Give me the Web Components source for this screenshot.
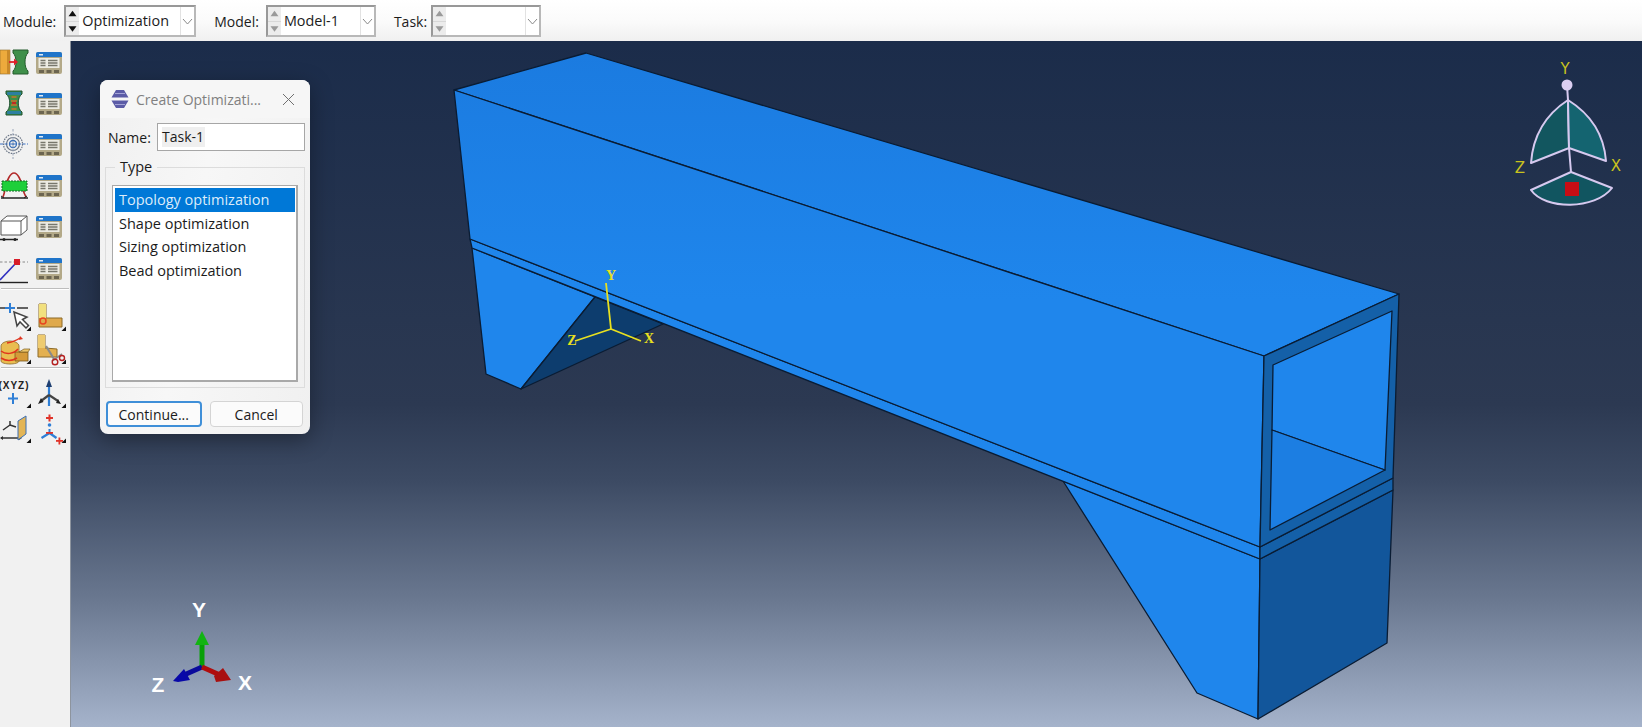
<!DOCTYPE html>
<html>
<head>
<meta charset="utf-8">
<title>Create Optimization Task</title>
<style>
    html, body { margin: 0; height: 100%; overflow: hidden; background: #f0f0f0; }
</style>
</head>
<body>
<abq-app>
    <abq-context-bar slot="top">
        <abq-combo label="Module:" value="Optimization" width="132" gap="8" active></abq-combo>
        <abq-combo label="Model:" value="Model-1" width="110" gap="7"></abq-combo>
        <abq-combo label="Task:" value="" width="110" gap="4"></abq-combo>
    </abq-context-bar>
    <abq-toolbox slot="left"></abq-toolbox>
    <abq-viewport slot="main">
        <abq-dialog heading="Create Optimizati...">
            <abq-list selected="0">
                <span>Topology optimization</span>
                <span>Shape optimization</span>
                <span>Sizing optimization</span>
                <span>Bead optimization</span>
            </abq-list>
        </abq-dialog>
    </abq-viewport>
</abq-app>

<script>
// Ikon toolbox, kotak 32x32
const managerIcon = `
    <rect x="1" y="6" width="26" height="22" rx="2" fill="#b3a988"/>
    <path d="M1 11V8a2 2 0 0 1 2-2h22a2 2 0 0 1 2 2v3z" fill="#1f74c9"/>
    <rect x="4" y="8" width="4" height="1.5" fill="#dfeaf5"/>
    <rect x="3.5" y="12" width="21" height="10" fill="#ecebe3"/>
    <path d="M5.5 14.5h5M5.5 17h5M5.5 19.5h5M13 14.5h9.500M13 17h9.500M13 19.5h9.500" stroke="#77776c" stroke-width="1.3"/>
    <rect x="4" y="24" width="5" height="3" fill="#6c6550"/>
    <rect x="11.500" y="24" width="5" height="3" fill="#6c6550"/>
    <rect x="19" y="24" width="5" height="3" fill="#6c6550"/>`;

const ICONS = {
    manager: managerIcon,
    shapeDesign: `
        <rect x="0" y="4" width="10" height="24" fill="#edaa3c" stroke="#8c6a28" stroke-width=".6"/>
        <rect x="7" y="4" width="3" height="24" fill="#c98a2a"/>
        <path d="M13 4h15v3c-4 3-4 15 0 18v3H13v-3c4-3 4-15 0-18z" fill="#3f8f4a" stroke="#245a2c" stroke-width="1"/>
        <path d="M9 16h6" stroke="#e0202a" stroke-width="1.800"/>
        <path d="M18 16l-4-3.500v7z" fill="#e0202a"/>`,
    sensitivity: `
        <path d="M6 4h16v3c-5 3-5 15 0 18v3H6v-3c5-3 5-15 0-18z" fill="#3d8e48" stroke="#1f5030" stroke-width="1"/>
        <rect x="7" y="5" width="14" height="3" rx="1" fill="#2c7fa0"/>
        <rect x="7" y="24" width="14" height="3" rx="1" fill="#2c7fa0"/>
        <path d="M11.500 10h5M11 14h6M11 18h6M11.500 22h5" stroke="#c9742c" stroke-width="1.600"/>
        <path d="M12 16h4" stroke="#c02a24" stroke-width="2"/>`,
    target: `
        <g fill="none" stroke="#6c7686">
            <circle cx="13" cy="16" r="9.500" stroke-width="1.200" stroke-dasharray="1.600 1"/>
            <circle cx="13" cy="16" r="6.500" stroke-width="1.200"/>
        </g>
        <circle cx="13" cy="16" r="3.500" fill="none" stroke="#3b6fb6" stroke-width="1.300"/>
        <circle cx="13" cy="16" r="1" fill="#3b6fb6"/>
        <path d="M0 16h28" stroke="#3b6fc0" stroke-width="1" stroke-dasharray="3 1.500"/>
        <path d="M13 1v30" stroke="#9aa5b8" stroke-width="1" stroke-dasharray="2.500 1.500"/>`,
    constraint: `
        <path d="M1 29h27" stroke="#222" stroke-width="1.500"/>
        <path d="M3 28c2-5 2-9 3-12 1-4 4-12 8-12s7 8 8 12c1 3 1 7 4 12" fill="none" stroke="#b22a2a" stroke-width="1.600"/>
        <rect x="2" y="12" width="25" height="10" fill="#1ecf3a" stroke="#156a24" stroke-width="1" stroke-dasharray="2 1"/>
        <path d="M1 27l3 2M27 27l-3 2" stroke="#222"/>`,
    box: `
        <path d="M1 11l6-5h20v14l-6 5H1z" fill="#fff" stroke="#555" stroke-width="1"/>
        <path d="M1 11h20v14M21 11l6-5" fill="none" stroke="#555" stroke-width="1"/>
        <path d="M0 29.500h18" stroke="#222" stroke-width="1.500"/>
        <circle cx="4" cy="29.500" r="1.500" fill="#222"/><circle cx="15" cy="29.500" r="1.500" fill="#222"/>`,
    amplitude: `
        <path d="M0 10h28" stroke="#888" stroke-width="1" stroke-dasharray="2.500 2"/>
        <path d="M0 28L17 10" stroke="#3030c0" stroke-width="1.600"/>
        <path d="M0 30.500h28" stroke="#222" stroke-width="1.400"/>
        <rect x="14" y="7" width="6" height="6" fill="#d81e2a"/>`,
    query: `
        <path d="M0 7h7M17 7h11" stroke="#333" stroke-width="1.300"/>
        <path d="M10 2v10M5 7h10" stroke="#2f7fd6" stroke-width="2"/>
        <path d="M14 11l3 14 3-4 6 6 2.500-2.500-6-6 4.500-2.500z" fill="#fff" stroke="#444" stroke-width="1.500"/>`,
    partition: `
        <path d="M4 3h7v14h16v9H4z" fill="#dfa94c" stroke="#8c6a28" stroke-width="1"/>
        <path d="M4 3h7v14H4z" fill="#f2e07e"/>
        <circle cx="8" cy="20" r="3" fill="none" stroke="#e8451f" stroke-width="1.500"/>`,
    solid: `
        <path d="M1 12c0-3 5-5 9-5s9 2 9 5v15c0 2-5 3-9 3s-9-1-9-3z" fill="#e9bd50" stroke="#8c6a28" stroke-width=".8"/>
        <path d="M15 18h13v9H15z" fill="#d59a38" stroke="#7a5b20" stroke-width=".8"/>
        <path d="M19 18l5-3h6l-2 3z" fill="#eec76a" stroke="#7a5b20" stroke-width=".7"/>
        <path d="M1 17c5 4 13 3 17-2M1 24c5 3 11 3 16 0M7 9c5-1 9-2 13-5" fill="none" stroke="#e0341e" stroke-width="1.500"/>
        <path d="M20 2l3 3-4 1z" fill="#e0341e"/>`,
    cut: `
        <path d="M3 1h7v13l12 1v8H3z" fill="#e3b050" stroke="#8c6a28" stroke-width="1"/>
        <path d="M3 1h7v13H3z" fill="#eecb70"/>
        <path d="M11 12l8 13" stroke="#8a8a8a" stroke-width="2.200"/>
        <path d="M27 20l-10 7" stroke="#8a8a8a" stroke-width="1.600"/>
        <circle cx="20" cy="28" r="2.800" fill="none" stroke="#b52020" stroke-width="1.400"/>
        <circle cx="27" cy="24" r="2.500" fill="none" stroke="#b52020" stroke-width="1.400"/>`,
    xyz: `
        <text x="14" y="11" text-anchor="middle" font-family="'Liberation Sans',sans-serif" font-size="10" font-weight="700" letter-spacing="1" fill="#222">(XYZ)</text>
        <path d="M13 15v11M8 20.500h10" stroke="#2f7fd6" stroke-width="2"/>`,
    csys: `
        <path d="M14 4v24" stroke="#2f7fd6" stroke-width="2.200"/>
        <path d="M14 1l-3 8h6z" fill="#1f3f70"/>
        <path d="M14 17l-8 6M14 17l9 6" stroke="#444" stroke-width="2.200"/>
        <path d="M3 26l3-6 2.500 4zM26 26l-5-1 2-4z" fill="#222"/>`,
    plane: `
        <path d="M3 17l7-5M10 12v-4M10 12l6 2" stroke="#333" stroke-width="1.500"/>
        <path d="M1 25h20" stroke="#333" stroke-width="1.500"/>
        <path d="M0 25l3-2v4zM22 25l-3-2v4z" fill="#333"/>
        <path d="M18 8l8-5v18l-8 6z" fill="#e3b556" stroke="#3a6fb6" stroke-width="1"/>`,
    datum: `
        <g fill="#e0342a"><rect x="11" y="4" width="7" height="2"/><rect x="13.500" y="1.500" width="2" height="7"/></g>
        <circle cx="14.500" cy="12" r="1.800" fill="#2f7fd6"/>
        <path d="M14.500 16v4" stroke="#2f7fd6" stroke-width="2"/>
        <path d="M14.500 20l-8 5M14.500 20l7 5" stroke="#2f7fd6" stroke-width="2.200"/>
        <g fill="#e0342a"><rect x="11" y="19" width="7" height="1.800"/><rect x="21" y="27" width="7" height="1.800"/><rect x="23.500" y="24.500" width="1.800" height="7"/></g>`
};

// Layout utama halaman
class AbqApp extends HTMLElement {
    constructor() {
        super();
        this.attachShadow({ mode: 'open' }).innerHTML = `
            <style>
                :host {
                    display: grid;
                    grid-template: 41px 686px / 71px 1571px;
                    width: 1642px;
                    height: 727px;
                    font-family: "Open Sans", "Liberation Sans", sans-serif;
                    color: #1b1b1b;
                }
                .top { grid-column: 1 / 3; display: grid; }
                .left, .main { display: grid; min-height: 0; }
            </style>
            <div class="top"><slot name="top"></slot></div>
            <div class="left"><slot name="left"></slot></div>
            <div class="main"><slot name="main"></slot></div>
        `;
    }
}

class AbqContextBar extends HTMLElement {
    constructor() {
        super();
        this.attachShadow({ mode: 'open' }).innerHTML = `
            <style>
                :host {
                    display: flex;
                    align-items: flex-start;
                    gap: 18px;
                    padding: 5px 0 0 3px;
                    box-sizing: border-box;
                    background: linear-gradient(#ffffff, #fafafa 55%, #f0f0f0);
                }
            </style>
            <slot></slot>
        `;
    }
}

// Combo box dengan spinner dan panah
class AbqCombo extends HTMLElement {
    constructor() {
        super();
        this.attachShadow({ mode: 'open' });
    }

    connectedCallback() {
        const arrow = this.hasAttribute('active') ? '#111' : '#9a9a9a';
        const label = this.getAttribute('label');
        this.shadowRoot.innerHTML = `
            <style>
                :host { display: flex; align-items: center; gap: ${this.getAttribute('gap')}px; height: 32px; font-size: 14px; }
                .box {
                    display: flex;
                    box-sizing: border-box;
                    height: 32px;
                    width: ${this.getAttribute('width')}px;
                    border: 2px solid #989898;
                    border-right-color: #b8b8b8;
                    border-bottom-color: #b8b8b8;
                    background: #fff;
                }
                .spin {
                    width: 13px;
                    background: #d8d8d8;
                    display: grid;
                    grid-template-rows: 1fr 1fr;
                    gap: 1px;
                }
                .spin svg { display: block; width: 13px; height: 100%; background: #ececec; }
                .value { flex: 1; padding-left: 3px; line-height: 27px; white-space: pre; font-size: 14.400px; }
                .drop { width: 13px; border-left: 1px solid #e2e2e2; display: flex; align-items: center; justify-content: center; }
            </style>
            <span>${label}</span>
            <div class="box">
                <div class="spin">
                    <svg viewBox="0 0 13 13"><path d="M2.500 9L6.500 3.500l4 5.500z" fill="${arrow}"/></svg>
                    <svg viewBox="0 0 13 13"><path d="M2.500 4L6.500 9.500l4-5.500z" fill="${arrow}"/></svg>
                </div>
                <div class="value">${this.getAttribute('value')}</div>
                <div class="drop">
                    <svg width="11" height="7" viewBox="0 0 11 7"><path d="M1 1l4.500 5L10 1" fill="none" stroke="#8a8a8a"/></svg>
                </div>
            </div>
        `;
    }
}

class AbqTool extends HTMLElement {
    constructor() {
        super();
        this.attachShadow({ mode: 'open' });
    }

    connectedCallback() {
        const flyout = this.hasAttribute('flyout')
            ? '<path d="M31 30v-4.500l-4.500 4.500z" fill="#111"/>' : '';
        this.shadowRoot.innerHTML = `
            <style>
                :host { display: flex; align-items: center; justify-content: center; }
                svg { display: block; overflow: visible; }
            </style>
            <svg width="32" height="32" viewBox="0 0 32 32">${ICONS[this.getAttribute('icon')]}${flyout}</svg>
        `;
    }
}

class AbqToolbox extends HTMLElement {
    constructor() {
        super();
        const rows = [
            ['shapeDesign', 'manager'], ['sensitivity', 'manager'], ['target', 'manager'],
            ['constraint', 'manager'], ['box', 'manager'], ['amplitude', 'manager']
        ];
        const tool = (name, flyout) => `<abq-tool icon="${name}"${flyout ? ' flyout' : ''}></abq-tool>`;
        this.attachShadow({ mode: 'open' }).innerHTML = `
            <style>
                :host {
                    display: block;
                    box-sizing: border-box;
                    background: #f1f1f1;
                    border-right: 1px solid #8d949e;
                }
                .group { display: grid; grid-template-columns: 31px 39px; }
                .managers { grid-auto-rows: 41.2px; }
                .mid { grid-auto-rows: 33px; padding-top: 10px; }
                .low { grid-auto-rows: 35px; padding-top: 7px; }
                hr { border: 0; border-top: 1px solid #bdbdbd; border-bottom: 1px solid #fff; margin: 0 1px; }
            </style>
            <div class="group managers">${rows.map(r => tool(r[0]) + tool(r[1])).join('')}</div>
            <hr>
            <div class="group mid">
                ${tool('query', 1)}${tool('partition', 1)}${tool('solid', 1)}${tool('cut', 1)}
            </div>
            <hr style="margin-top:1px">
            <div class="group low">
                ${tool('xyz', 1)}${tool('csys', 1)}${tool('plane', 1)}${tool('datum', 1)}
            </div>
        `;
    }
}

// Kanvas model: koordinat svg = koordinat halaman dikurangi (71, 41)
class AbqViewport extends HTMLElement {
    constructor() {
        super();
        this.attachShadow({ mode: 'open' }).innerHTML = `
            <style>
                :host {
                    display: block;
                    position: relative;
                    overflow: hidden;
                    background: linear-gradient(#1b2c4a 0, #2c3952 53%, #3c4a63 64%, #6a7890 81.500%, #a5b3cb 100%);
                }
                svg { position: absolute; left: 0; top: 0; }
                ::slotted(abq-dialog) { position: absolute; left: 29px; top: 39px; }
                text { font-family: "DejaVu Sans", sans-serif; }
            </style>
            <svg width="1571" height="686" viewBox="71 41 1571 686">
                <defs>
                    <linearGradient id="topFace" gradientUnits="userSpaceOnUse" x1="0" y1="53" x2="0" y2="300">
                        <stop offset="0" stop-color="#1b7be0"/>
                        <stop offset="1" stop-color="#1f86ec"/>
                    </linearGradient>
                </defs>
                <g stroke="#0a1c33" stroke-width="1.300" stroke-linejoin="round">
                    <!-- rongga bawah dan pelat kiri -->
                    <path d="M472 248L486 374L521 389L595 297Z" fill="#1f86ec"/>
                    <path d="M595 297L663 324L521 389Z" fill="#0d3d6e"/>
                    <path d="M1063 481L1260 559L1258 719L1197 693Z" fill="#1f86ec"/>
                    <path d="M1260 559L1393 490L1387 643L1258 719Z" fill="#12569b"/>
                    <!-- pelat tengah -->
                    <path d="M470 239L1260 547L1260 559L472 248Z" fill="#1f86ec"/>
                    <path d="M1260 547L1393 478L1393 490L1260 559Z" fill="#1460a8"/>
                    <!-- kotak atas -->
                    <path d="M454 90L586 53L1399 294L1264 356Z" fill="url(#topFace)"/>
                    <path d="M454 90L1264 356L1260 547L470 239Z" fill="url(#topFace)"/>
                    <path d="M1264 356L1399 294L1393 478L1260 547Z" fill="#1460a8"/>
                    <path d="M1273 365L1392 311L1385 470L1272 430Z" fill="#1f86ec"/>
                    <path d="M1272 430L1385 470L1270 530Z" fill="#1c7ee2"/>
                </g>

                <!-- triad asal model -->
                <g stroke="#e8e020" stroke-width="1.800" fill="none">
                    <path d="M606 283L611 329M611 329L575 341M611 329L641 341"/>
                </g>
                <g fill="#e8e020" font-size="14" text-anchor="middle">
                    <text x="611" y="280" style="font-family:'Liberation Serif',serif;font-weight:700">Y</text>
                    <text x="572" y="345" style="font-family:'Liberation Serif',serif;font-weight:700">Z</text>
                    <text x="649" y="343" style="font-family:'Liberation Serif',serif;font-weight:700">X</text>
                </g>

                <!-- view cube kanan atas -->
                <g stroke="#d6c9ef" stroke-width="2" stroke-linejoin="round">
                    <path d="M1568 100C1545 115 1533 135 1531 163L1569 148Z" fill="#12565f"/>
                    <path d="M1568 100C1592 115 1604 135 1606 161L1569 148Z" fill="#146470"/>
                    <path d="M1571 172L1531 190C1545 210 1595 210 1612 188Z" fill="#115560"/>
                    <path d="M1567 85L1568 100M1569 148L1571 172" fill="none"/>
                </g>
                <circle cx="1567" cy="85" r="5.500" fill="#dccff2"/>
                <rect x="1565" y="182" width="14" height="14" fill="#c80d14"/>
                <g fill="#c9c21e" font-size="15" text-anchor="middle">
                    <text x="1565" y="74">Y</text>
                    <text x="1520" y="173">Z</text>
                    <text x="1616" y="171">X</text>
                </g>

                <!-- triad kiri bawah -->
                <path d="M202 667V645" stroke="#08a008" stroke-width="5"/>
                <path d="M202 631L195 645H209Z" fill="#12b412"/>
                <path d="M202 667L184 675" stroke="#0a0a9c" stroke-width="5"/>
                <path d="M173 681L184 669L190 680L178 682Z" fill="#0808a8"/>
                <path d="M202 667L220 675" stroke="#b00c0c" stroke-width="5"/>
                <path d="M231 680L216 682L214 676L223 668Z" fill="#a81010"/>
                <g fill="#fff" font-size="21" text-anchor="middle">
                    <text x="199" y="617" style="font-family:'Liberation Sans',sans-serif;font-weight:700">Y</text>
                    <text x="158" y="692" style="font-family:'Liberation Sans',sans-serif;font-weight:700">Z</text>
                    <text x="245" y="690" style="font-family:'Liberation Sans',sans-serif;font-weight:700">X</text>
                </g>
            </svg>
            <slot></slot>
        `;
    }
}

class AbqDialog extends HTMLElement {
    constructor() {
        super();
        this.attachShadow({ mode: 'open' });
    }

    connectedCallback() {
        this.shadowRoot.innerHTML = `
            <style>
                :host {
                    display: block;
                    box-sizing: border-box;
                    width: 210px;
                    height: 354px;
                    border-radius: 8px;
                    overflow: hidden;
                    background: linear-gradient(100deg, #f0f0f0, #f7f7f7 45%, #f0f0f0);
                    box-shadow: 0 6px 22px rgba(0, 0, 0, .35);
                    font-size: 14px;
                }
                .title {
                    display: flex;
                    align-items: center;
                    height: 38px;
                    background: #f6f6f6;
                    color: #808080;
                    font-size: 14px;
                    padding-left: 11px;
                    box-sizing: border-box;
                }
                .title span { flex: 1; padding-left: 7px; }
                .title svg:last-child { margin-right: 15px; }
                .name { display: flex; align-items: center; gap: 5px; padding: 5px 5px 0 8px; }
                .name span { width: 44px; white-space: nowrap; }
                .name div {
                    flex: 1;
                    box-sizing: border-box;
                    height: 28px;
                    border: 1px solid #a6a6a6;
                    background: #fff;
                    padding: 3px 4px;
                    line-height: 20px;
                }
                .name b { font-weight: 400; background: #efefef; display: inline-block; padding-right: 1px; }
                fieldset {
                    margin: 6px 5px 0;
                    padding: 8px 6px 4px 6px;
                    height: 231px;
                    box-sizing: border-box;
                    border: 1px solid #dcdcdc;
                    min-width: 0;
                }
                legend { margin-left: 3px; padding: 0 5px; line-height: 20px; font-size: 14.500px; }
                .buttons { display: flex; gap: 8px; padding: 13px 7px 0 6px; }
                button {
                    flex: 1;
                    height: 26px;
                    font: inherit;
                    color: #1b1b1b;
                    padding: 0;
                    border: 1px solid #d4d4d4;
                    border-radius: 4px;
                    background: #fbfbfb;
                }
                button.main { border: 2px solid #3f8fd8; }
            </style>
            <div class="title">
                <svg width="18" height="18" viewBox="0 0 18 18">
                    <path d="M5 0H13L17.500 7.500H.5Z" fill="#5b5ba6"/>
                    <path d="M.5 10.500H17.500L13 18H5Z" fill="#5b5ba6"/>
                    <path d="M4 3.500h10M4 14.500h10" stroke="#a3a3d6"/>
                </svg>
                <span>${this.getAttribute('heading')}</span>
                <svg width="13" height="13" viewBox="0 0 13 13"><path d="M1 1l11 11M12 1L1 12" stroke="#707070" stroke-width="1"/></svg>
            </div>
            <div class="name">
                <span>Name:</span>
                <div><b>Task-1</b></div>
            </div>
            <fieldset>
                <legend>Type</legend>
                <slot></slot>
            </fieldset>
            <div class="buttons">
                <button class="main">Continue...</button>
                <button>Cancel</button>
            </div>
        `;
    }
}

// List pilihan dengan satu baris terpilih
class AbqList extends HTMLElement {
    constructor() {
        super();
        this.attachShadow({ mode: 'open' }).innerHTML = `
            <style>
                :host {
                    display: flex;
                    flex-direction: column;
                    box-sizing: border-box;
                    height: 197px;
                    padding: 2px 1px 2px 2px;
                    background: #fff;
                    border: 1px solid #a9a9a9;
                    border-bottom-width: 2px;
                    border-right-width: 2px;
                    font-size: 14.500px;
                }
                ::slotted(span) { display: block; height: 23.600px; line-height: 23.600px; padding-left: 4px; }
                ::slotted(.selected) { background: #0078d7; color: #dcecfa; }
            </style>
            <slot></slot>
        `;
    }

    connectedCallback() {
        const idx = Number(this.getAttribute('selected'));
        this.querySelectorAll('span')[idx].className = 'selected';
    }
}

customElements.define('abq-app', AbqApp);
customElements.define('abq-context-bar', AbqContextBar);
customElements.define('abq-combo', AbqCombo);
customElements.define('abq-tool', AbqTool);
customElements.define('abq-toolbox', AbqToolbox);
customElements.define('abq-viewport', AbqViewport);
customElements.define('abq-dialog', AbqDialog);
customElements.define('abq-list', AbqList);
</script>
</body>
</html>
